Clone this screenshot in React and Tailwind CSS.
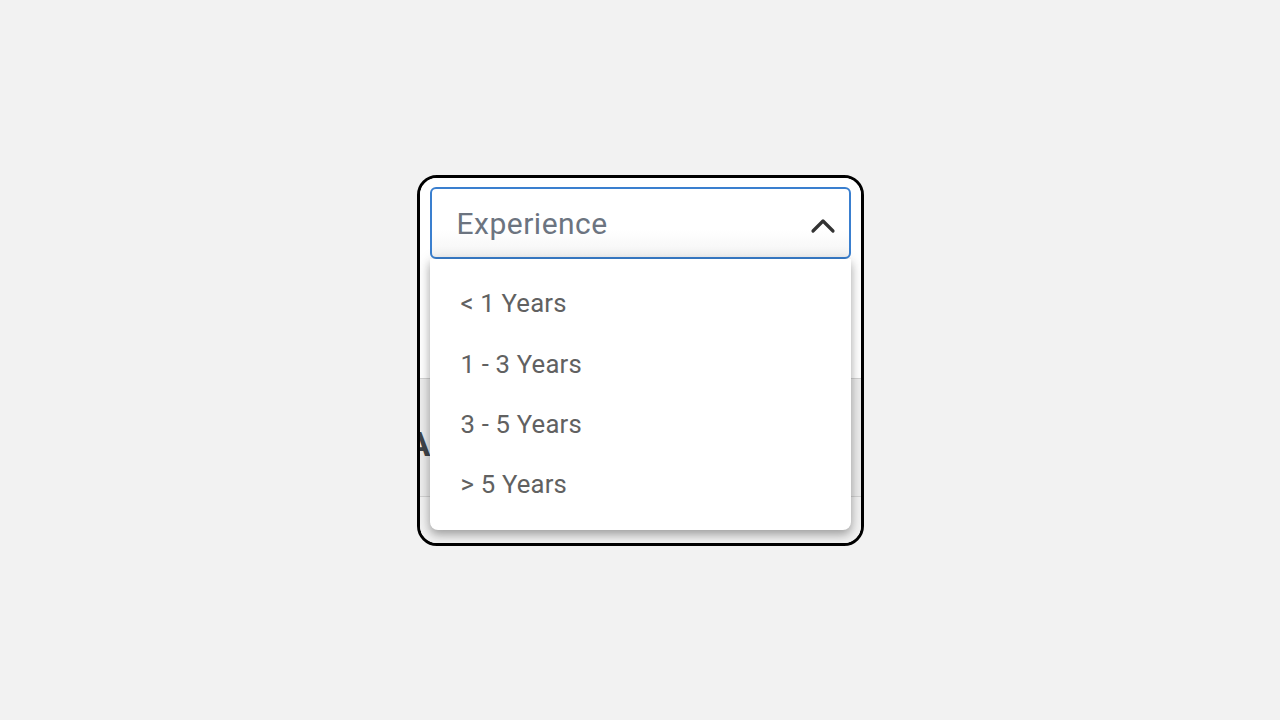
import React from 'react';

const options = ['< 1 Years', '1 - 3 Years', '3 - 5 Years', '> 5 Years'];

export default function App() {
  return (
    <div className="w-[1280px] h-[720px] bg-[#f2f2f2] flex items-center justify-center font-['Roboto',sans-serif]">
      {/* Frame */}
      <div className="relative w-[447px] h-[371px] border-[3.5px] border-black rounded-[20px] overflow-hidden bg-white">
        {/* Page behind the dropdown */}
        <div className="flex flex-col h-full">
          <div className="h-[200px] bg-white" />
          <div className="h-[119px] bg-[#ececec] border-y border-[#d2d2d2] flex items-center pt-[14px]">
            <span className="-ml-[12px] text-[34px] font-bold text-[#3f4449] leading-none">A</span>
          </div>
          <div className="flex-1 bg-[#f1f1f1]" />
        </div>

        {/* Select */}
        <div className="absolute left-[10px] top-[9px] w-[421px]">
          <div className="h-[72px] rounded-[6px] border-2 border-[#3a7fcf] bg-gradient-to-b from-white from-60% to-[#f4f4f4] flex items-center justify-between pl-[25px] pr-[12px]">
            <span className="text-[30px] text-[#6c7480] pt-[2px] tracking-[0.5px]">Experience</span>
            <svg width="28" height="20" viewBox="0 0 28 20" fill="none" className="mt-[6px]">
              <polyline points="4,15 14,5 24,15" stroke="#333" strokeWidth="3.2" strokeLinecap="round" strokeLinejoin="round" />
            </svg>
          </div>

          {/* Menu */}
          <div className="bg-white rounded-b-[8px] shadow-[0_5px_10px_rgba(0,0,0,0.28),0_0_14px_rgba(0,0,0,0.12)] pt-[15px] pb-[15px]">
            {options.map((o) => (
              <div key={o} className="h-[60.3px] flex items-center pl-[31px] text-[25.7px] text-[#616161] tracking-[0.2px]">
                {o}
              </div>
            ))}
          </div>
        </div>
      </div>
    </div>
  );
}
